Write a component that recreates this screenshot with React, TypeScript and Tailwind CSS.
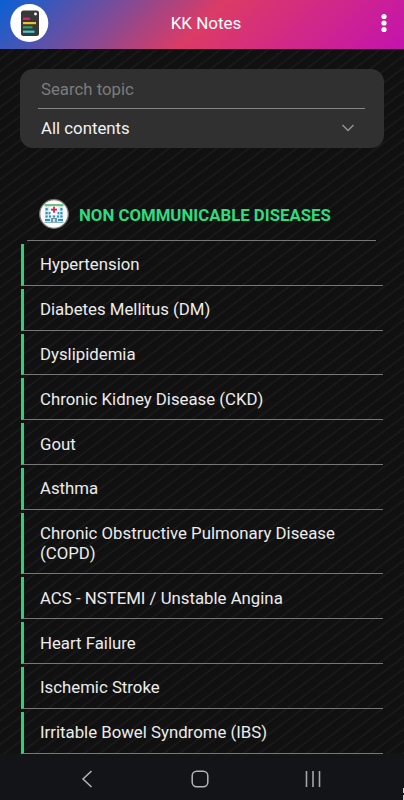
import React from 'react';

const topics = [
    'Hypertension',
    'Diabetes Mellitus (DM)',
    'Dyslipidemia',
    'Chronic Kidney Disease (CKD)',
    'Gout',
    'Asthma',
    'Chronic Obstructive Pulmonary Disease (COPD)',
    'ACS - NSTEMI / Unstable Angina',
    'Heart Failure',
    'Ischemic Stroke',
    'Irritable Bowel Syndrome (IBS)',
];

function LogoIcon() {
    return (
        <svg width="39" height="38" viewBox="0 0 39 38">
            <circle cx="19.3" cy="19" r="19" fill="#fff" />
            <rect x="11" y="6.5" width="18" height="25.5" rx="2.5" fill="#383838" />
            <circle cx="25.5" cy="10" r="1.4" fill="#fff" />
            <rect x="13" y="13.6" width="7" height="2.2" fill="#e0217d" />
            <rect x="13" y="18" width="13" height="2.2" fill="#f2bf35" />
            <rect x="13" y="22.2" width="9.5" height="2.2" fill="#23a566" />
            <rect x="13" y="26.6" width="11.5" height="2.2" fill="#48cbd8" />
        </svg>
    );
}

function HospitalIcon() {
    return (
        <svg width="30" height="30" viewBox="0 0 30 30">
            <circle cx="15" cy="15" r="14.3" fill="#fafafa" stroke="#777" strokeWidth="1.3" />
            <path d="M6 7h18v17H6z" fill="#d3edf5" />
            <path d="M10.5 7h9v9h-9z" fill="#f7fbfc" />
            <rect x="5.5" y="5" width="19" height="2.2" fill="#79bd83" />
            <path d="M6.5 9h2.2v2.4H6.5zM21.3 9h2.2v2.4h-2.2zM6.5 13h2.2v2.2H6.5zM9.7 13h1.8v2.2H9.7zM18.5 13h1.8v2.2h-1.8zM21.3 13h2.2v2.2h-2.2zM6.5 16.5h2.2v2H6.5zM10 16.5h2v2h-2zM14 16.5h2v2h-2zM18 16.5h2v2h-2zM21.3 16.5h2.2v2h-2.2zM6 20h5v2H6zM19 20h5v2h-5z" fill="#398fb1" />
            <path d="M12 19h6v4h-6z" fill="#7195a5" />
            <path d="M14 20h2v3h-2z" fill="#c7e5ef" />
            <path d="M5.5 23.4h19" stroke="#6c98aa" strokeWidth="0.8" />
            <path d="M15 7.7v6M12 10.7h6" stroke="#e21b50" strokeWidth="1.8" />
        </svg>
    );
}

function SearchCard() {
    return (
        <div className="mx-5 mt-5 h-[79px] rounded-[13px] bg-[#303030] pt-[7px]">
            <div className="mr-[19px] ml-[18px] h-[33px] border-b border-[#858585] pl-[3px] leading-[26px] text-[#7c7c7c]">
                Search topic
            </div>
            <div className="mr-[29px] ml-[21px] flex h-10 items-center justify-between text-[#f2f2f2]">
                <span>All contents</span>
                <svg width="14" height="8" viewBox="0 0 14 8" fill="none" className="mb-[3px]">
                    <path d="M1.5 1L7 6.5L12.5 1" stroke="#929292" strokeWidth="1.5" />
                </svg>
            </div>
        </div>
    );
}

function TopicRow({ title }: { title: string }) {
    return (
        <li className="flex min-h-[41.8px] border-b border-b-[#777] border-l-[3px] border-l-[#2ed07c] pr-6 pl-4 leading-[19.8px]">
            <span className="pt-[11.4px] pb-[9.6px]">{title}</span>
        </li>
    );
}

export default function App() {
    return (
        <div className="relative flex h-[800px] w-[404px] flex-col overflow-hidden bg-[#111] font-['Roboto',sans-serif] text-[16.8px] text-[#ececec]">
            <header className="grid h-[49px] shrink-0 grid-cols-[1fr_auto_1fr] items-center bg-[linear-gradient(135deg,#0a60d4_0%,#dc3b66_50%,#c313ae_100%)] pr-[17px] pl-[10px]">
                <div className="-mt-[3px]"><LogoIcon /></div>
                <h1 className="mb-[2px] pl-[15px] text-[17px] text-white">KK Notes</h1>
                <svg width="6" height="20" viewBox="0 0 6 20" fill="#fff" className="mb-[3px] justify-self-end">
                    <circle cx="3" cy="3.5" r="2.6" />
                    <circle cx="3" cy="10" r="2.6" />
                    <circle cx="3" cy="16.5" r="2.6" />
                </svg>
            </header>

            <main className="h-[705px] shrink-0 overflow-hidden bg-[#101010] bg-[repeating-linear-gradient(143deg,#101010_0px,#111111_7px,#1c1c1c_8.3px,#111111_9.6px)]">
                <SearchCard />

                <div className="mt-[50.5px] mr-7 ml-[27px] flex h-[42px] items-start border-b border-[#777] pl-3">
                    <HospitalIcon />
                    <h2 className="ml-[10px] text-[16.8px] leading-[32px] font-bold text-[#2edc80]">NON COMMUNICABLE DISEASES</h2>
                </div>

                <ul className="mt-[3.5px] mr-[21px] ml-[21px] flex flex-col gap-[3px]">
                    {topics.map((t) => (
                        <TopicRow key={t} title={t} />
                    ))}
                </ul>
            </main>

            <nav className="flex h-[46px] shrink-0 items-center bg-[#121417] pt-[4px] pl-[81px]">
                <svg width="12" height="18" viewBox="0 0 12 18" fill="none">
                    <path d="M10.5 1L2 9L10.5 17" stroke="#b5b5b7" strokeWidth="1.5" />
                </svg>
                <svg width="18" height="18" viewBox="0 0 18 18" fill="none" className="ml-[98px]">
                    <rect x="1.2" y="1.2" width="15.6" height="15.6" rx="4.5" stroke="#b5b5b7" strokeWidth="1.5" />
                </svg>
                <svg width="16" height="18" viewBox="0 0 16 18" fill="none" className="ml-[96px]">
                    <path d="M1.5 1v16M8 1v16M14.5 1v16" stroke="#a5a5a8" strokeWidth="1.6" />
                </svg>
            </nav>

            {/* edge marks in the bottom corner */}
            <div className="absolute right-0 bottom-0 flex flex-col gap-[2px]">
                <span className="h-[5px] w-px bg-[#d5d5d5]" />
                <span className="h-[5px] w-px bg-[#d5d5d5]" />
            </div>
        </div>
    );
}
